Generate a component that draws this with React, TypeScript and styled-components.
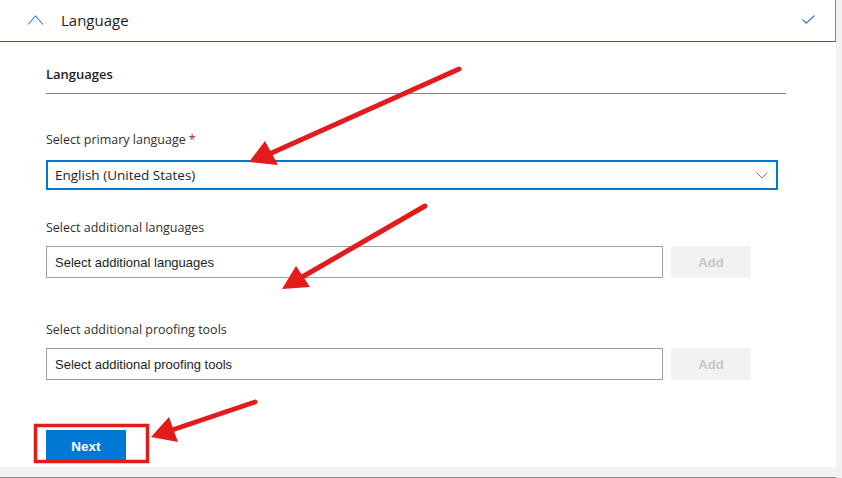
import React from 'react'
import styled, { createGlobalStyle } from 'styled-components'

const GlobalStyle = createGlobalStyle`
  html, body {
    margin: 0;
    padding: 0;
    background: #f3f2f1;
  }
  * {
    box-sizing: border-box;
  }
`

const Page = styled.div`
  position: relative;
  width: 842px;
  height: 478px;
  overflow: hidden;
  background: #f3f2f1;
  font-family: "Open Sans", "Noto Sans", sans-serif;
  color: #201f1e;
`

const Card = styled.div`
  width: 836px;
  height: 467px;
  background: #ffffff;
`

const Header = styled.div`
  height: 42px;
  display: flex;
  align-items: center;
  padding: 0 20px 2px 27px;
  border-bottom: 1px solid #106ebe;
  border-right: 1px solid #8a8886;
`

const HeaderTitle = styled.div`
  margin-left: 17px;
  font-size: 15px;
  flex: 1;
  color: #201f1e;
`

const Body = styled.div`
  padding: 22px 0 0 46px;
  display: flex;
  flex-direction: column;
`

const SectionTitle = styled.div`
  font-size: 13px;
  font-weight: 600;
  line-height: 20px;
  width: 740px;
  padding-bottom: 9px;
  border-bottom: 1px solid #8a8886;
`

const Label = styled.div<{ $top: number }>`
  margin-top: ${p => p.$top}px;
  font-size: 12.5px;
  line-height: 20px;
  color: #323130;

  span {
    color: #a4262c;
    margin-left: 3px;
  }
`

const Dropdown = styled.div`
  margin-top: 10px;
  width: 732px;
  height: 30px;
  border: 2px solid #0078d4;
  display: flex;
  align-items: center;
  justify-content: space-between;
  padding: 0 8px 0 7px;
  font-size: 13.5px;
  color: #201f1e;
`

const Row = styled.div`
  margin-top: 8px;
  display: flex;
  gap: 8px;
`

const TextBox = styled.div`
  width: 617px;
  height: 32px;
  border: 1px solid #a19f9d;
  display: flex;
  align-items: center;
  padding-left: 8px;
  font-family: "Liberation Sans", Arial, sans-serif;
  font-size: 13px;
  color: #201f1e;
`

const AddButton = styled.div`
  width: 80px;
  height: 32px;
  border-radius: 2px;
  background: #f3f2f1;
  color: #c8c6c4;
  font-family: "Liberation Sans", Arial, sans-serif;
  font-weight: 700;
  font-size: 13px;
  display: flex;
  align-items: center;
  justify-content: center;
`

const Footer = styled.div`
  margin-top: 50px;
  display: flex;
`

const NextButton = styled.div`
  width: 80px;
  height: 32px;
  background: #0078d4;
  color: #ffffff;
  font-family: "Liberation Sans", Arial, sans-serif;
  font-weight: 700;
  font-size: 13.5px;
  display: flex;
  align-items: center;
  justify-content: center;
`

const NextSection = styled.div`
  margin-top: 10px;
  width: 836px;
  border-top: 1px solid #8a8886;
`

/* callout layer: red arrows and the box round the Next button */
const Callouts = styled.svg`
  position: absolute;
  left: 0;
  top: 0;
  pointer-events: none;
`

const ChevronUp = () => (
  <svg width="17" height="10" viewBox="0 0 17 10">
    <path d="M1 9.5 L8.5 1 L16 9.5" fill="none" stroke="#2b7cd3" strokeWidth="1.1" />
  </svg>
)

const Check = () => (
  <svg width="13" height="9" viewBox="0 0 13 9">
    <path d="M0.5 4.5 L4.2 8.2 L12.5 0.5" fill="none" stroke="#2b7cd3" strokeWidth="1.1" />
  </svg>
)

const ChevronDown = () => (
  <svg width="12" height="7" viewBox="0 0 12 7">
    <path d="M0.5 0.5 L6 6 L11.5 0.5" fill="none" stroke="#9a7350" strokeWidth="1" />
  </svg>
)

type Arrow = { tail: [number, number]; tip: [number, number]; a: [number, number]; b: [number, number] }

const arrows: Arrow[] = [
  { tail: [459, 69], tip: [249, 162], a: [265, 141], b: [278, 165] },
  { tail: [425, 206], tip: [282, 289], a: [296, 266], b: [310, 287] },
  { tail: [255, 402], tip: [151, 437], a: [169, 417], b: [178, 442] },
]

const App = () => {
  return (
    <Page>
      <GlobalStyle />
      <Card>
        <Header>
          <ChevronUp />
          <HeaderTitle>Language</HeaderTitle>
          <Check />
        </Header>
        <Body>
          <SectionTitle>Languages</SectionTitle>

          <Label $top={36}>
            Select primary language<span>*</span>
          </Label>
          <Dropdown>
            English (United States)
            <ChevronDown />
          </Dropdown>

          <Label $top={28}>Select additional languages</Label>
          <Row>
            <TextBox>Select additional languages</TextBox>
            <AddButton>Add</AddButton>
          </Row>

          <Label $top={42}>Select additional proofing tools</Label>
          <Row>
            <TextBox>Select additional proofing tools</TextBox>
            <AddButton>Add</AddButton>
          </Row>

          <Footer>
            <NextButton>Next</NextButton>
          </Footer>
        </Body>
      </Card>
      <NextSection />

      <Callouts width="842" height="478" viewBox="0 0 842 478">
        <rect x="35.5" y="425.5" width="112" height="36" fill="none" stroke="#e31b1b" strokeWidth="3.5" />
        {arrows.map((ar, i) => {
          const mx = (ar.a[0] + ar.b[0]) / 2
          const my = (ar.a[1] + ar.b[1]) / 2
          return (
            <g key={i}>
              <line x1={ar.tail[0]} y1={ar.tail[1]} x2={mx} y2={my} stroke="#e31b1b" strokeWidth="5" strokeLinecap="round" />
              <polygon points={`${ar.tip.join(',')} ${ar.a.join(',')} ${ar.b.join(',')}`} fill="#e31b1b" />
            </g>
          )
        })}
      </Callouts>
    </Page>
  )
}

export default App
